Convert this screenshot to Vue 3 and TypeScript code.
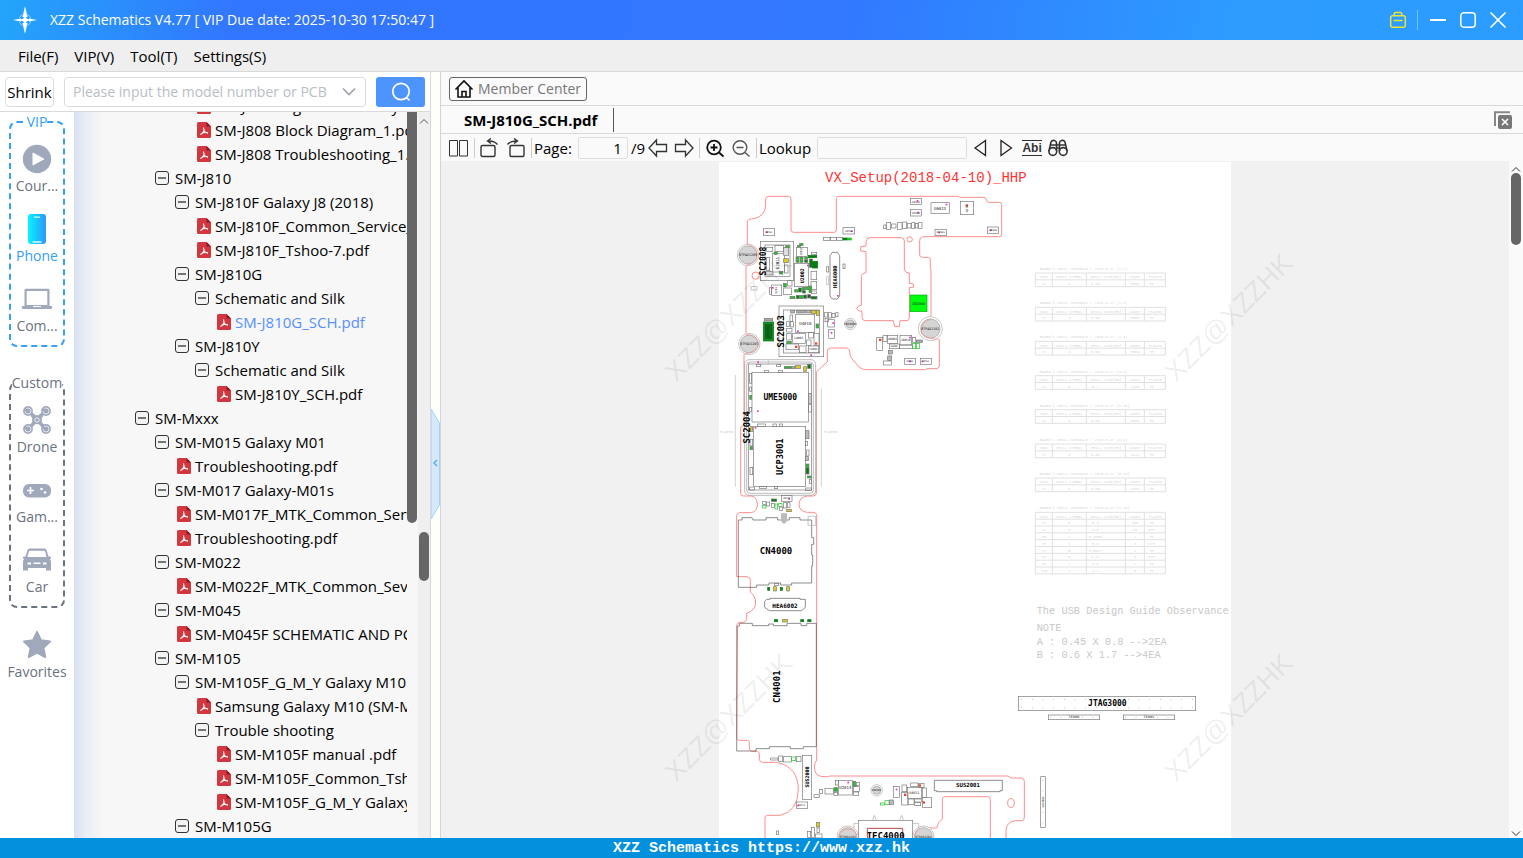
<script setup lang="ts">
import { ref } from 'vue'

interface TreeRow { level: number; label: string; file?: boolean; active?: boolean }
interface Category { id: string; label: string; active?: boolean }
interface Part { x: number; y: number; w: number; h: number; f?: string; s?: string }
interface Mark { x: number; y: number; t: string; z: number; r?: boolean }

const menus = ['File(F)', 'VIP(V)', 'Tool(T)', 'Settings(S)']
const keyword = ref('')
const page = ref('1')
const lookup = ref('')

const groups: { title: string; kind: string; items: Category[] }[] = [
  { title: 'VIP', kind: 'vip', items: [{ id: 'course', label: 'Cour...' }, { id: 'phone', label: 'Phone', active: true }, { id: 'computer', label: 'Com...' }] },
  { title: 'Custom', kind: 'custom', items: [{ id: 'drone', label: 'Drone' }, { id: 'game', label: 'Gam...' }, { id: 'car', label: 'Car' }] },
]

const tree: TreeRow[] = [
  { level: 3, label: 'SM-J808 Regular Assembly', file: true },
  { level: 3, label: 'SM-J808 Block Diagram_1.pdf', file: true },
  { level: 3, label: 'SM-J808 Troubleshooting_1.pdf', file: true },
  { level: 1, label: 'SM-J810' },
  { level: 2, label: 'SM-J810F Galaxy J8 (2018)' },
  { level: 3, label: 'SM-J810F_Common_Service_Manual.pdf', file: true },
  { level: 3, label: 'SM-J810F_Tshoo-7.pdf', file: true },
  { level: 2, label: 'SM-J810G' },
  { level: 3, label: 'Schematic and Silk' },
  { level: 4, label: 'SM-J810G_SCH.pdf', file: true, active: true },
  { level: 2, label: 'SM-J810Y' },
  { level: 3, label: 'Schematic and Silk' },
  { level: 4, label: 'SM-J810Y_SCH.pdf', file: true },
  { level: 0, label: 'SM-Mxxx' },
  { level: 1, label: 'SM-M015 Galaxy M01' },
  { level: 2, label: 'Troubleshooting.pdf', file: true },
  { level: 1, label: 'SM-M017 Galaxy-M01s' },
  { level: 2, label: 'SM-M017F_MTK_Common_Service.pdf', file: true },
  { level: 2, label: 'Troubleshooting.pdf', file: true },
  { level: 1, label: 'SM-M022' },
  { level: 2, label: 'SM-M022F_MTK_Common_Sevice.pdf', file: true },
  { level: 1, label: 'SM-M045' },
  { level: 2, label: 'SM-M045F SCHEMATIC AND PCB.pdf', file: true },
  { level: 1, label: 'SM-M105' },
  { level: 2, label: 'SM-M105F_G_M_Y Galaxy M10' },
  { level: 3, label: 'Samsung Galaxy M10 (SM-M105).pdf', file: true },
  { level: 3, label: 'Trouble shooting' },
  { level: 4, label: 'SM-M105F manual .pdf', file: true },
  { level: 4, label: 'SM-M105F_Common_Tshoo.pdf', file: true },
  { level: 4, label: 'SM-M105F_G_M_Y Galaxy.pdf', file: true },
  { level: 2, label: 'SM-M105G' },
]

// Board artwork uses three units per screen pixel.
const outline = [
  'M82 253V186Q82 177 95 177Q138 172 137 132V116Q138 109 146 109H206Q213 109 213 116V210Q214 217 221 217H342Q349 217 349 210V116Q350 109 357 109H715L718 112H792Q799 114 799 120Q800 127 808 127H838Q845 127 845 134V223Q845 230 838 230H608Q599 233 599 241V285Q600 292 607 292H625Q632 293 631 300V325L633 330V470',
  'M78 318V520M72 583V795L62 802V1000Q62 1008 70 1008H95Q112 1012 112 1033Q112 1056 92 1058H58Q50 1060 50 1067V1250H82Q91 1252 91 1260V1296Q107 1308 107 1330Q106 1350 80 1360V1378Q76 1386 70 1387H58Q50 1389 50 1397V1733Q50 1741 58 1741H82Q88 1742 88 1748V1767Q90 1774 96 1774H112Q118 1776 118 1782V1798Q119 1807 128 1807H170Q235 1820 235 1890Q233 1955 180 1966H142Q135 1967 135 1974V2036',
  'M658 538V618Q657 626 648 626H620L616 629H440Q422 629 412 615L394 594Q390 590 390 580Q390 564 376 564H332Q322 565 322 574V605L289 636V1000Q288 1008 280 1008H262Q237 1012 237 1033Q238 1055 262 1057H282Q289 1058 290 1066V1800Q283 1808 283 1825Q285 1850 312 1850H325L330 1848H864L874 1854H904Q913 1855 913 1864V1972Q913 1980 906 1982H886Q858 1986 858 2012V2036',
  'M450 233H543Q553 233 553 243V330Q555 338 568 339V370L580 372V382H568V475Q568 482 558 482H540L538 500H524L520 482H436Q426 482 426 472V454Q411 453 411 445Q411 438 424 436V350Q424 340 438 338V275L422 273V260L438 258V245Q440 233 450 233Z',
  'M600 2004H650Q654 1985 667 1977V1918Q667 1910 677 1910H803Q811 1911 811 1918V2036',
]

const grey = '#777'
const green = '#19c51e'
const dark = '#087a12'
const yellow = '#dfca22'
const parts: Part[] = [
  { x: 571, y: 115, w: 33, h: 18 }, { x: 571, y: 148, w: 33, h: 20 }, { x: 633, y: 128, w: 55, h: 32 }, { x: 721, y: 124, w: 40, h: 40 },
  { x: 645, y: 208, w: 34, h: 19 }, { x: 802, y: 201, w: 33, h: 19 }, { x: 130, y: 206, w: 34, h: 20 }, { x: 369, y: 203, w: 35, h: 19 },
  { x: 310, y: 232, w: 20, h: 9 }, { x: 331, y: 232, w: 18, h: 9 }, { x: 350, y: 232, w: 18, h: 9 }, { x: 369, y: 234, w: 13, h: 6, f: dark, s: dark }, { x: 383, y: 234, w: 11, h: 6, f: green, s: green },
  { x: 491, y: 195, w: 7, h: 11 }, { x: 500, y: 187, w: 12, h: 21 }, { x: 514, y: 192, w: 14, h: 12 }, { x: 532, y: 188, w: 14, h: 20 }, { x: 548, y: 186, w: 12, h: 20 }, { x: 562, y: 190, w: 11, h: 14 }, { x: 575, y: 188, w: 9, h: 17 }, { x: 586, y: 190, w: 8, h: 14 }, { x: 596, y: 188, w: 10, h: 17 },
  { x: 121, y: 244, w: 100, h: 118 }, { x: 135, y: 255, w: 75, h: 94 }, { x: 158, y: 280, w: 35, h: 56 }, { x: 140, y: 262, w: 18, h: 12 }, { x: 165, y: 256, w: 25, h: 18 }, { x: 191, y: 262, w: 15, h: 24, f: '#ddd' }, { x: 191, y: 296, w: 14, h: 12, f: yellow }, { x: 162, y: 276, w: 10, h: 7, f: green }, { x: 178, y: 334, w: 10, h: 8, f: green }, { x: 193, y: 315, w: 11, h: 24 }, { x: 140, y: 292, w: 9, h: 40 }, { x: 135, y: 335, w: 24, h: 10, f: '#ddd' }, { x: 197, y: 257, w: 11, h: 6, f: green },
  { x: 223, y: 310, w: 43, h: 70 }, { x: 229, y: 262, w: 33, h: 27 }, { x: 239, y: 250, w: 10, h: 7, f: green }, { x: 232, y: 256, w: 9, h: 5, f: green },
  { x: 228, y: 291, w: 9, h: 7, f: green }, { x: 240, y: 291, w: 9, h: 7, f: green }, { x: 254, y: 291, w: 9, h: 7, f: green }, { x: 228, y: 300, w: 9, h: 7, f: green }, { x: 240, y: 300, w: 9, h: 7, f: green }, { x: 254, y: 300, w: 9, h: 7, f: dark },
  { x: 265, y: 286, w: 25, h: 7, f: dark, s: dark }, { x: 268, y: 297, w: 10, h: 25, f: dark }, { x: 277, y: 304, w: 16, h: 20, f: dark, s: dark }, { x: 274, y: 277, w: 16, h: 6 }, { x: 273, y: 334, w: 17, h: 25 }, { x: 273, y: 364, w: 17, h: 25 }, { x: 267, y: 378, w: 8, h: 20, f: green }, { x: 275, y: 393, w: 14, h: 8 },
  { x: 224, y: 389, w: 9, h: 7, f: green }, { x: 235, y: 384, w: 9, h: 12, f: dark }, { x: 246, y: 382, w: 9, h: 8, f: green }, { x: 257, y: 381, w: 9, h: 8, f: green }, { x: 247, y: 392, w: 9, h: 7, f: dark },
  { x: 210, y: 409, w: 15, h: 7, f: green }, { x: 229, y: 406, w: 9, h: 10, f: dark }, { x: 240, y: 406, w: 9, h: 10, f: green }, { x: 251, y: 405, w: 9, h: 10, f: dark }, { x: 263, y: 404, w: 9, h: 10, f: '#444' }, { x: 273, y: 409, w: 18, h: 8, f: dark },
  { x: 155, y: 375, w: 30, h: 31 }, { x: 149, y: 383, w: 5, h: 20 }, { x: 190, y: 370, w: 9, h: 11, f: green }, { x: 203, y: 362, w: 13, h: 16 }, { x: 191, y: 384, w: 23, h: 20 },
  { x: 130, y: 486, w: 31, h: 57, f: '#138e25', s: '#0b7319' }, { x: 137, y: 493, w: 17, h: 42, f: '#087018', s: '#055512' }, { x: 133, y: 475, w: 25, h: 8, f: '#aaa' },
  { x: 177, y: 438, w: 134, h: 152 }, { x: 190, y: 450, w: 109, h: 129 }, { x: 226, y: 463, w: 58, h: 54 }, { x: 218, y: 520, w: 38, h: 30 }, { x: 282, y: 520, w: 15, h: 36 }, { x: 265, y: 558, w: 31, h: 20 }, { x: 260, y: 540, w: 13, h: 17 }, { x: 265, y: 517, w: 15, h: 17 },
  { x: 210, y: 465, w: 8, h: 20 }, { x: 200, y: 485, w: 8, h: 15 }, { x: 212, y: 485, w: 8, h: 16 }, { x: 200, y: 505, w: 16, h: 11 }, { x: 200, y: 520, w: 14, h: 20 }, { x: 200, y: 544, w: 14, h: 7, f: green }, { x: 198, y: 552, w: 38, h: 17 }, { x: 238, y: 558, w: 20, h: 20 },
  { x: 212, y: 451, w: 12, h: 8, f: '#bbb' }, { x: 230, y: 451, w: 26, h: 8, f: '#aaa' }, { x: 260, y: 451, w: 12, h: 8, f: '#bbb' }, { x: 274, y: 451, w: 14, h: 9, f: yellow }, { x: 289, y: 452, w: 9, h: 14, f: yellow }, { x: 288, y: 492, w: 8, h: 12, f: green },
  { x: 313, y: 458, w: 10, h: 13 }, { x: 325, y: 458, w: 9, h: 16 }, { x: 336, y: 460, w: 9, h: 13 }, { x: 347, y: 458, w: 7, h: 12 }, { x: 315, y: 475, w: 10, h: 10 }, { x: 323, y: 479, w: 20, h: 22 }, { x: 326, y: 508, w: 17, h: 27 },
  { x: 470, y: 532, w: 18, h: 39 }, { x: 489, y: 527, w: 12, h: 17 }, { x: 502, y: 526, w: 31, h: 24 }, { x: 540, y: 526, w: 35, h: 29 }, { x: 508, y: 552, w: 30, h: 14 }, { x: 538, y: 555, w: 39, h: 11 }, { x: 577, y: 532, w: 10, h: 15 }, { x: 578, y: 550, w: 9, h: 16, s: green }, { x: 589, y: 550, w: 9, h: 16, s: green }, { x: 589, y: 540, w: 18, h: 7, f: '#aaa' },
  { x: 505, y: 571, w: 12, h: 11, f: '#bbb' }, { x: 503, y: 588, w: 12, h: 13, f: '#bbb' }, { x: 490, y: 603, w: 24, h: 12 }, { x: 554, y: 595, w: 32, h: 18 }, { x: 601, y: 595, w: 33, h: 18 }, { x: 570, y: 405, w: 51, h: 50, f: '#00ff0c', s: '#0aa813' },
  { x: 320, y: 320, w: 6, h: 16 }, { x: 320, y: 350, w: 6, h: 24, s: '#bbb' }, { x: 369, y: 312, w: 6, h: 14 }, { x: 93, y: 380, w: 18, h: 10, s: '#aaa' },
  { x: 85, y: 612, w: 190, h: 378 }, { x: 96, y: 637, w: 169, h: 149 }, { x: 101, y: 799, w: 156, h: 180 },
  { x: 110, y: 613, w: 12, h: 7 }, { x: 170, y: 613, w: 12, h: 7 }, { x: 134, y: 631, w: 11, h: 7 }, { x: 176, y: 631, w: 11, h: 7 }, { x: 193, y: 619, w: 10, h: 7, f: green }, { x: 204, y: 619, w: 10, h: 7, f: green }, { x: 227, y: 616, w: 14, h: 10, f: yellow }, { x: 251, y: 620, w: 8, h: 14, f: yellow }, { x: 263, y: 613, w: 9, h: 12, f: dark }, { x: 215, y: 619, w: 10, h: 7, f: '#aaa' },
  { x: 89, y: 640, w: 6, h: 30 }, { x: 89, y: 681, w: 6, h: 13 }, { x: 89, y: 706, w: 6, h: 12, f: green }, { x: 89, y: 742, w: 6, h: 12 }, { x: 266, y: 700, w: 8, h: 30, f: '#ccc' }, { x: 266, y: 733, w: 8, h: 23 },
  { x: 90, y: 800, w: 8, h: 14, f: yellow }, { x: 90, y: 838, w: 8, h: 20 }, { x: 90, y: 860, w: 8, h: 9, f: green }, { x: 90, y: 922, w: 8, h: 22 }, { x: 112, y: 792, w: 24, h: 7 }, { x: 159, y: 792, w: 10, h: 7 }, { x: 178, y: 792, w: 10, h: 7 }, { x: 89, y: 981, w: 14, h: 9 }, { x: 119, y: 979, w: 20, h: 7 }, { x: 163, y: 979, w: 10, h: 7 }, { x: 257, y: 984, w: 17, h: 8 },
  { x: 257, y: 812, w: 10, h: 24, f: '#bbb' }, { x: 256, y: 844, w: 7, h: 12 }, { x: 260, y: 870, w: 7, h: 18 }, { x: 256, y: 890, w: 9, h: 12, f: '#bbb' }, { x: 258, y: 912, w: 9, h: 9, f: green }, { x: 258, y: 923, w: 9, h: 19, f: dark }, { x: 262, y: 948, w: 12, h: 6, f: green }, { x: 268, y: 958, w: 6, h: 12 },
  { x: 184, y: 1006, w: 32, h: 18 }, { x: 154, y: 1017, w: 16, h: 7, f: dark }, { x: 128, y: 1024, w: 10, h: 9 }, { x: 128, y: 1036, w: 10, h: 8, s: green }, { x: 140, y: 1026, w: 9, h: 12 }, { x: 154, y: 1030, w: 9, h: 12 }, { x: 165, y: 1032, w: 8, h: 15, s: green }, { x: 176, y: 1030, w: 10, h: 9, s: green }, { x: 178, y: 1041, w: 10, h: 10 }, { x: 190, y: 1028, w: 10, h: 16 }, { x: 202, y: 1028, w: 8, h: 14 }, { x: 200, y: 1048, w: 14, h: 7, f: yellow },
  { x: 143, y: 1282, w: 6, h: 9, f: dark, s: dark }, { x: 161, y: 1280, w: 8, h: 13, f: yellow }, { x: 181, y: 1282, w: 6, h: 9, f: dark, s: dark }, { x: 200, y: 1280, w: 8, h: 13, f: yellow }, { x: 164, y: 1270, w: 11, h: 7 },
  { x: 163, y: 1379, w: 10, h: 6, f: dark, s: dark }, { x: 188, y: 1378, w: 14, h: 8, f: yellow }, { x: 242, y: 1379, w: 9, h: 6, f: dark, s: dark }, { x: 263, y: 1379, w: 10, h: 6, f: dark, s: dark },
  { x: 247, y: 1786, w: 28, h: 132 }, { x: 176, y: 1788, w: 12, h: 16 }, { x: 190, y: 1790, w: 24, h: 16 }, { x: 215, y: 1791, w: 12, h: 11, s: green }, { x: 229, y: 1789, w: 14, h: 16 }, { x: 152, y: 1794, w: 22, h: 6 }, { x: 229, y: 1926, w: 34, h: 19 },
  { x: 355, y: 1861, w: 42, h: 44 }, { x: 399, y: 1864, w: 8, h: 15, f: green }, { x: 409, y: 1867, w: 9, h: 10 }, { x: 400, y: 1880, w: 18, h: 14 }, { x: 400, y: 1896, w: 16, h: 10 }, { x: 342, y: 1883, w: 11, h: 11, f: green }, { x: 342, y: 1897, w: 11, h: 9 }, { x: 315, y: 1885, w: 25, h: 17 }, { x: 298, y: 1888, w: 10, h: 12 }, { x: 282, y: 1904, w: 16, h: 8 }, { x: 346, y: 1861, w: 9, h: 14 },
  { x: 520, y: 1879, w: 18, h: 33 }, { x: 562, y: 1882, w: 43, h: 33 }, { x: 545, y: 1897, w: 19, h: 38 }, { x: 607, y: 1884, w: 12, h: 28 }, { x: 546, y: 1875, w: 14, h: 20 }, { x: 572, y: 1869, w: 22, h: 10 }, { x: 596, y: 1870, w: 16, h: 13 }, { x: 564, y: 1917, w: 18, h: 16 }, { x: 584, y: 1917, w: 20, h: 9 }, { x: 584, y: 1928, w: 18, h: 9 }, { x: 607, y: 1913, w: 28, h: 29 }, { x: 495, y: 1922, w: 12, h: 11, s: green }, { x: 508, y: 1920, w: 12, h: 14, f: '#bbb' }, { x: 481, y: 1929, w: 12, h: 6, s: green },
  { x: 289, y: 1987, w: 10, h: 14, f: yellow }, { x: 291, y: 2004, w: 7, h: 14 }, { x: 262, y: 2014, w: 10, h: 18 }, { x: 274, y: 2002, w: 9, h: 30 }, { x: 286, y: 2022, w: 20, h: 12 }, { x: 169, y: 2013, w: 7, h: 10 },
  { x: 415, y: 1981, w: 163, h: 60 }, { x: 895, y: 1609, w: 532, h: 43 }, { x: 985, y: 1665, w: 154, h: 14 }, { x: 1210, y: 1665, w: 154, h: 14 }, { x: 962, y: 1850, w: 14, h: 152 },
]

const marks: Mark[] = [
  { x: 181, y: 720, t: 'UME5000', z: 24 }, { x: 188, y: 890, t: 'UCP3001', z: 26, r: true }, { x: 90, y: 802, t: 'SC2004', z: 27, r: true },
  { x: 139, y: 303, t: 'SC2008', z: 24, r: true }, { x: 193, y: 514, t: 'SC2003', z: 27, r: true }, { x: 252, y: 347, t: 'U2002', z: 15, r: true }, { x: 350, y: 350, t: 'HEA6000', z: 16, r: true },
  { x: 168, y: 1182, t: 'CN4000', z: 27 }, { x: 195, y: 1343, t: 'HEA6002', z: 18 }, { x: 180, y: 1580, t: 'CN4001', z: 27, r: true },
  { x: 267, y: 1851, t: 'SUS2000', z: 15, r: true }, { x: 744, y: 1882, t: 'SUS2001', z: 17 }, { x: 497, y: 2036, t: 'IFC4000', z: 27 }, { x: 1162, y: 1639, t: 'JTAG3000', z: 24 },
]
const minor: Mark[] = [
  { x: 660, y: 149, t: 'U6013', z: 12 }, { x: 588, y: 128, t: 'ANT602', z: 7 }, { x: 588, y: 162, t: 'ANT603', z: 7 }, { x: 743, y: 146, t: 'ANT6', z: 9, r: true }, { x: 256, y: 494, t: 'U4010', z: 12 }, { x: 236, y: 538, t: 'LA003', z: 9 }, { x: 177, y: 309, t: 'U2015', z: 12, r: true },
  { x: 518, y: 541, t: 'U6001', z: 9 }, { x: 558, y: 544, t: 'U6010', z: 9 }, { x: 522, y: 562, t: 'F6000', z: 7 }, { x: 596, y: 434, t: 'CN2000', z: 11 }, { x: 148, y: 515, t: 'USC2001', z: 9, r: true },
  { x: 376, y: 1888, t: 'U2014', z: 12 }, { x: 583, y: 1901, t: 'U4012', z: 10 }, { x: 84, y: 289, t: 'BTPAD1209', z: 10 }, { x: 88, y: 556, t: 'BTPAD1205', z: 10 }, { x: 631, y: 511, t: 'BTPAD1202', z: 10 }, { x: 391, y: 495, t: 'PAD6004', z: 9 },
  { x: 470, y: 1894, t: 'PAD401', z: 8 }, { x: 383, y: 2034, t: 'BTPAD1203', z: 9 }, { x: 610, y: 2034, t: 'BTPAD1204', z: 9 }, { x: 245, y: 274, t: 'U2012', z: 8, r: true }, { x: 172, y: 391, t: 'Q201', z: 8, r: true }, { x: 280, y: 571, t: 'C4003', z: 8 }, { x: 1062, y: 1675, t: 'TP3000', z: 9 }, { x: 1287, y: 1675, t: 'TP3001', z: 9 }, { x: 972, y: 1926, t: 'SUS2002', z: 8, r: true },
  { x: 146, y: 219, t: 'ANT61', z: 7 }, { x: 386, y: 215, t: 'ANT65', z: 7 }, { x: 662, y: 220, t: 'ANT601', z: 7 }, { x: 819, y: 213, t: 'ANT602', z: 7 }, { x: 570, y: 606, t: 'ANT62', z: 7 }, { x: 616, y: 606, t: 'ANT63', z: 7 }, { x: 200, y: 1018, t: 'ANT40', z: 7 }, { x: 245, y: 1938, t: 'ANT41', z: 7 },
]
const pins = [[592, 122], [594, 157], [679, 133], [657, 217], [812, 210], [395, 213], [140, 216], [263, 316], [233, 513], [158, 383], [273, 585], [570, 604], [607, 604], [570, 532], [114, 606], [113, 753], [106, 803], [207, 1016], [234, 1936], [339, 489], [334, 518], [384, 1867], [529, 1888], [353, 407]]
const hots = [[740, 136], [480, 539], [228, 560], [288, 550], [599, 1876], [555, 1904], [611, 1927]]
const pads = [[84, 285, 32, 27], [88, 552, 32, 27], [631, 506, 36, 29], [391, 492, 17, 12], [383, 2030, 32, 27], [610, 2030, 32, 27], [470, 1891, 17, 12]]

const drills = [
  { span: '(1-2)', rows: [['T1', 'O', '0.09', '5008', 'TH']] },
  { span: '(1-3)', rows: [['T1', 'O', '0.09', '6085', 'TH']] },
  { span: '(2-3)', rows: [['T1', 'O', '0.09', '3884', 'TH']] },
  { span: '(3-8)', rows: [['T2', '⊕', '0.2', '2485', 'TH']] },
  { span: '(8-10)', rows: [['T1', 'O', '0.09', '5858', 'TH']] },
  { span: '(8-9)', rows: [['T1', 'O', '0.09', '2821', 'TH']] },
  { span: '(9-10)', rows: [['T1', 'O', '0.09', '4304', 'TH']] },
  { span: '(1-10)', rows: [['T3', '⊕', '0.3', '380', 'TH'], ['T4', '⊕', '0.5', '48', 'NTH'], ['T5', '◇', '0.4500', '2', 'TH'], ['T6', '□', '0.6', '3', 'NTH'], ['T7', '⊠', '0.6017', '4', 'TH'], ['T8', '⊠', '1.42', '3', 'NTH'], ['T9', '+', '1.6', '2', 'TH'], ['T10', 'x', '4.4', '5', 'TH']] },
]
const heads = ['TOOL', 'DRILL SYMBOL', 'DRILL SIZE(mm)', 'COUNT', 'PLATED']
const centers = [26, 102, 212, 299, 360]
const edges = [0, 51, 153, 270, 327, 390]
const drillTop = (i: number) => 339 + Math.round(i * 102.5)
const stamps = [[-132, 669], [1368, 669], [-132, 1869], [1368, 1869]]
</script>

<template>
  <div class="app">
    <header class="titlebar">
      <svg class="logo" width="26" height="30" viewBox="0 0 26 30" aria-hidden="true">
        <path d="M13 1L15.500 12L10.500 12ZM13 29L10.500 18H15.500ZM1 15L9 13.600V16.400ZM25 15L17 13.600V16.400Z" fill="#fff" />
        <circle cx="13" cy="15" r="6" fill="none" stroke="#8fd0ff" stroke-width="1" stroke-dasharray="6 3.400" stroke-dashoffset="-1.500" />
        <path d="M13 8L14.500 13.500L19 15L14.500 16.500L13 22L11.500 16.500L7 15L11.500 13.500Z" fill="#fff" />
      </svg>
      <h1>XZZ Schematics V4.77 [ VIP Due date: 2025-10-30 17:50:47 ]</h1>
      <button class="win vipbag" aria-label="VIP"><svg width="18" height="18" viewBox="0 0 18 18"><g fill="none" stroke="#e8e337" stroke-width="1.5"><rect x="1.7" y="4.7" width="14.6" height="11.6" rx="2" /><path d="M5.2 4.5V3Q5.2 1.5 6.6 1.5H11.4Q12.8 1.5 12.8 3V4.5M4.500 9.500H13.500" /></g></svg></button>
      <span class="winsep"></span>
      <button class="win" aria-label="Minimize"><svg width="18" height="18" viewBox="0 0 18 18"><path d="M1 9H17" stroke="#fff" stroke-width="2" /></svg></button>
      <button class="win" aria-label="Maximize"><svg width="18" height="18" viewBox="0 0 18 18"><rect x="1.8" y="1.8" width="14.4" height="14.4" rx="3" fill="none" stroke="#fff" stroke-width="1.5" /></svg></button>
      <button class="win" aria-label="Close"><svg width="18" height="18" viewBox="0 0 18 18"><path d="M1.5 1.5L16.5 16.5M16.5 1.5L1.5 16.5" stroke="#fff" stroke-width="1.7" /></svg></button>
    </header>

    <nav class="menubar"><button v-for="m in menus" :key="m">{{ m }}</button></nav>

    <main class="body">
      <section class="left">
        <form class="search" @submit.prevent>
          <button type="button" class="shrink">Shrink</button>
          <div class="combo">
            <input v-model="keyword" aria-label="Model number" placeholder="Please input the model number or PCB" />
            <button type="button" aria-label="Show history"><svg width="16" height="10" viewBox="0 0 16 10"><path d="M2 1.5L8 7.5L14 1.5" fill="none" stroke="#a0a4aa" stroke-width="1.7" /></svg></button>
          </div>
          <button class="go" aria-label="Search"><svg width="22" height="22" viewBox="0 0 22 22"><g fill="none" stroke="#fff" stroke-width="1.7"><circle cx="11" cy="10.5" r="8.2" /><path d="M16.5 16.5L19.5 19.5" /></g></svg></button>
        </form>

        <div class="browse">
          <aside class="cats">
            <fieldset v-for="g in groups" :key="g.title" :class="g.kind">
              <legend>{{ g.title }}</legend>
              <button v-for="c in g.items" :key="c.id" class="cat" :class="{ on: c.active }">
                <svg v-if="c.id === 'course'" width="34" height="34" viewBox="0 0 34 34"><circle cx="17" cy="17" r="14.2" fill="#a0a8bb" /><path d="M12.5 11.3V22.7Q12.5 23.6 13.4 23.2L23.8 17.6Q24.6 17 23.8 16.4L13.4 10.8Q12.5 10.4 12.5 11.3Z" fill="#fff" /></svg>
                <svg v-else-if="c.id === 'phone'" width="34" height="34" viewBox="0 0 34 34"><defs><linearGradient id="ph"><stop offset="0" stop-color="#04f4ff" /><stop offset="1" stop-color="#2e96fb" /></linearGradient></defs><rect x="8" y="2" width="18" height="30" rx="3" fill="url(#ph)" /><path d="M14.5 5.2H19.5M13 30H21" stroke="#d9fbff" stroke-width="1.3" stroke-linecap="round" /></svg>
                <svg v-else-if="c.id === 'computer'" width="34" height="34" viewBox="0 0 34 34"><path fill-rule="evenodd" fill="#a0a8bb" d="M4.5 8Q4.5 6.7 5.8 6.7H28.2Q29.5 6.7 29.5 8V24H32V25.5Q32 27 30.5 27H3.500Q2 27 2 25.500V24H4.500ZM6.700 9V23H27.300V9ZM13 24V25H21V24Z" /></svg>
                <svg v-else-if="c.id === 'drone'" width="34" height="34" viewBox="0 0 34 34"><path d="M8 8L15 14H19L26 8M8 26L14 20V14M26 26L20 20V14M12 12L22 22M22 12L12 22" fill="none" stroke="#a0a8bb" stroke-width="3.600" /><circle v-for="p in [[8,8],[26,8],[8,26],[26,26]]" :key="p.join()" :cx="p[0]" :cy="p[1]" r="4.900" fill="#a0a8bb" /><g fill="none" stroke="#fff" stroke-width=".7"><circle v-for="p in [[8,8],[26,8],[8,26],[26,26]]" :key="p.join()" :cx="p[0]" :cy="p[1]" r="3" stroke-dasharray="9 3" /></g><circle cx="17" cy="17" r="4.200" fill="#a0a8bb" /><circle cx="17" cy="17" r="2.200" fill="none" stroke="#fff" stroke-width=".8" /></svg>
                <svg v-else-if="c.id === 'game'" width="34" height="34" viewBox="0 0 34 34"><rect x="3" y="11" width="28" height="13.500" rx="6" fill="#a0a8bb" /><path d="M7 17.500H14M10.500 14V21" stroke="#fff" stroke-width="1.700" /><circle cx="21.500" cy="16" r="1.300" fill="#fff" /><circle cx="25" cy="19.500" r="1.300" fill="#fff" /></svg>
                <svg v-else width="34" height="34" viewBox="0 0 34 34"><path fill-rule="evenodd" fill="#a0a8bb" d="M9.500 5.500H24.500Q26 5.500 26.500 7L28.500 13.500L31 13.800V15.500L29.800 16Q31 17 31 19V27.500H26V25H8V27.500H3V19Q3 17 4.200 16L3 15.500V13.800L5.500 13.500L7.500 7Q8 5.500 9.500 5.500ZM10 7.800Q9 7.800 8.800 8.800L7.500 14H26.500L25.200 8.800Q25 7.800 24 7.800ZM7.500 19.500V21.500H11V19.500ZM13.500 19.500V21H20.500V19.500ZM23 19.500V21.500H26.500V19.500Z" /></svg>
                <span>{{ c.label }}</span>
              </button>
            </fieldset>
            <button class="cat fav">
              <svg width="34" height="34" viewBox="0 0 34 34"><path d="M17 4L20.900 12.300L30 13.500L23.400 19.700L25.200 29L17 24.500L8.800 29L10.600 19.700L4 13.500L13.100 12.300Z" fill="#a0a8bb" stroke="#a0a8bb" stroke-width="2" stroke-linejoin="round" /></svg>
              <span>Favorites</span>
            </button>
          </aside>
          <div class="treebox">
            <ul class="tree">
              <li v-for="(n, i) in tree" :key="i" :class="['l' + n.level, { active: n.active, file: n.file }]">
                <svg v-if="n.file" width="16" height="18" viewBox="0 0 16 18"><path d="M1 2.500Q1 1 2.500 1H10.500L15 5.500V15.500Q15 17 13.500 17H2.500Q1 17 1 15.500Z" fill="#d2373f" /><path d="M10.500 1L15 5.500H10.500Z" fill="#8d1620" /><path d="M7.500 6.500Q8.600 8.800 7.200 11Q6 13.200 4.200 13.500M7.800 9.500Q9.500 12 12 12.200M5.800 12Q9 10.800 12 12" fill="none" stroke="#fff" stroke-width="1.100" /></svg>
                <button v-else :aria-label="'Collapse ' + n.label"><svg width="16" height="16" viewBox="0 0 16 16"><rect x="1.500" y="1.500" width="13" height="13" rx="2.500" fill="#f3f3f3" stroke="#333" /><path d="M4 8H12" stroke="#222" stroke-width="1.200" /></svg></button>
                <a href="#" @click.prevent>{{ n.label }}</a>
              </li>
            </ul>
            <div class="innerbar"><i></i></div>
          </div>
          <div class="outerbar">
            <svg width="12" height="8" viewBox="0 0 12 8"><path d="M2 6.500L6 2.500L10 6.500" fill="none" stroke="#555" /></svg>
            <i></i>
          </div>
        </div>
      </section>

      <div class="splitter"><button aria-label="Collapse panel"><svg width="9" height="110" viewBox="0 0 9 110"><path d="M0 0L8.500 14V96L0 110Z" fill="#d5e9fb" stroke="#9fd1fb" /><path d="M6 51L3 54L6 57" fill="none" stroke="#4ea8f4" stroke-width="1.300" /></svg></button></div>

      <section class="right">
        <div class="memberrow">
          <button class="member"><svg width="20" height="20" viewBox="0 0 20 20"><g fill="none" stroke="#111" stroke-width="1.600"><path d="M1.500 10.500L10 2L18.500 10.500M4 8.500V18H16V8.500M8 18V12.500H12V18" /></g></svg>Member Center</button>
        </div>
        <div class="tabs">
          <button class="tab">SM-J810G_SCH.pdf</button>
          <button class="closeall" aria-label="Close all"><svg width="20" height="20" viewBox="0 0 20 20"><path d="M2 16V2.200H17" fill="none" stroke="#888" stroke-width="2" /><rect x="5" y="5" width="14" height="14" rx="2" fill="#777" /><path d="M9 9L15 15M15 9L9 15" stroke="#fff" stroke-width="1.600" /></svg></button>
        </div>
        <div class="toolbar">
          <button aria-label="Two pages"><svg width="20" height="20" viewBox="0 0 20 20"><path d="M.5 2.500H8.500V18H.5ZM10.500 2.500H18.500V18H10.500Z" fill="none" stroke="#333" /></svg></button>
          <i class="sep"></i>
          <button aria-label="Rotate left"><svg width="20" height="20" viewBox="0 0 20 20"><g fill="none" stroke="#333" stroke-width="1.400"><rect x="1" y="7.500" width="14" height="11" rx="1.500" /><path d="M17.500 6.500Q14 2.500 8 3M11 .5L7.500 3L11 5.500" /></g></svg></button>
          <button aria-label="Rotate right"><svg width="20" height="20" viewBox="0 0 20 20"><g fill="none" stroke="#333" stroke-width="1.400"><rect x="4" y="7.500" width="14" height="11" rx="1.500" /><path d="M1.500 6.500Q5 2.500 11 3M8 .5L11.500 3L8 5.500" /></g></svg></button>
          <i class="sep"></i>
          <label for="page">Page:</label><input id="page" v-model="page" class="page" />
          <span class="total">/9</span>
          <button class="near" aria-label="Previous page"><svg width="20" height="20" viewBox="0 0 20 20"><path d="M1 10L8.500 2V6.500H18.500V13.500H8.500V18Z" fill="none" stroke="#333" stroke-width="1.300" /></svg></button>
          <button aria-label="Next page"><svg width="20" height="20" viewBox="0 0 20 20"><path d="M19 10L11.500 2V6.500H1.500V13.500H11.500V18Z" fill="none" stroke="#333" stroke-width="1.300" /></svg></button>
          <i class="sep"></i>
          <button aria-label="Zoom in"><svg width="20" height="20" viewBox="0 0 20 20"><g fill="none" stroke="#111" stroke-width="1.800"><circle cx="9" cy="9.500" r="6.800" /><path d="M14 14.500L18.500 18.500M5.500 9.500H12.500M9 6V13" /></g></svg></button>
          <button aria-label="Zoom out"><svg width="20" height="20" viewBox="0 0 20 20"><g fill="none" stroke="#555" stroke-width="1.400"><circle cx="9" cy="9.500" r="6.800" /><path d="M14 14.500L18.500 18.500M5.500 9.500H12.500" /></g></svg></button>
          <i class="sep"></i>
          <label for="lookup">Lookup</label><input id="lookup" v-model="lookup" class="lookup" />
          <button class="near" aria-label="Find previous"><svg width="20" height="20" viewBox="0 0 20 20"><path d="M15.500 2.500V17.500L5 10Z" fill="none" stroke="#222" stroke-width="1.300" /></svg></button>
          <button aria-label="Find next"><svg width="20" height="20" viewBox="0 0 20 20"><path d="M5 2.500V17.500L15.500 10Z" fill="none" stroke="#222" stroke-width="1.300" /></svg></button>
          <button class="abi">Abi</button>
          <button aria-label="Find all"><svg width="20" height="20" viewBox="0 0 20 20"><g fill="none" stroke="#333" stroke-width="1.600"><path d="M1 13L3 4Q4 2 6.500 2.500Q8.500 3 8.500 5V13M19 13L17 4Q16 2 13.500 2.500Q11.500 3 11.500 5V13M3 7H17M9 10H11" /><circle cx="4.800" cy="13.500" r="3.900" /><circle cx="15.200" cy="13.500" r="3.900" /></g></svg></button>
        </div>
        <div class="viewer">
          <div class="canvas">
            <svg class="sheet" width="512" height="676" viewBox="-3 6 1536 2028" role="img" aria-label="VX_Setup board placement">
              <rect x="-3" y="6" width="1536" height="2040" fill="#fff" />
              <text x="315" y="67" class="heading">VX_Setup(2018-04-10)_HHP</text>
              <g class="drill">
                <g v-for="(d, i) in drills" :key="i" :transform="`translate(946 ${drillTop(i)})`">
                  <text x="13" y="-9">BOARD's DRILL SCHEDULE / 2018-5-17 {{ d.span }}</text>
                  <path v-for="e in edges" :key="e" :d="`M${e} 0V${(d.rows.length + 1) * 20.5}`" />
                  <path v-for="r in d.rows.length + 2" :key="'r' + r" :d="`M0 ${(r - 1) * 20.5}H390`" />
                  <text v-for="(h, k) in heads" :key="h" :x="centers[k]" y="16" text-anchor="middle">{{ h }}</text>
                  <template v-for="(row, ri) in d.rows" :key="ri">
                    <text v-for="(c, k) in row" :key="k" :x="[26, 102, 180, 299, 348][k]" :y="36 + ri * 20.5" text-anchor="middle">{{ c }}</text>
                  </template>
                </g>
              </g>
              <g class="note">
                <text x="950" y="1362">The USB Design Guide Observance</text>
                <text x="950" y="1413">NOTE</text>
                <text x="950" y="1455">A : 0.45 X 0.8 --&gt;2EA</text>
                <text x="950" y="1493">B : 0.6 X 1.7 --&gt;4EA</text>
              </g>
              <g class="outline">
                <path v-for="o in outline" :key="o" :d="o" />
                <circle cx="107" cy="347" r="11" /><circle cx="569" cy="238" r="8" /><ellipse cx="873" cy="1929" rx="10" ry="13" />
              </g>
              <g fill="none" stroke="#999" stroke-width="2">
                <rect x="74" y="599" width="213" height="407" rx="14" /><rect x="80" y="606" width="200" height="394" rx="10" />
                <path d="M145 600V612M46 645V980M304 685V980" stroke="#bbb" />
              </g>
              <g fill="none" stroke="#555" stroke-width="2">
                <path d="M55 1080H66V1073H96L99 1080H138V1073H173V1080H208V1073H240V1080H275V1133H281V1153H275V1185H278V1217H275V1269H215V1275H182V1269H147V1275H110V1282H55Z" />
                <path d="M264 1069H287V1096H264Z" stroke="#aaa" />
                <path d="M52 1398H58V1390H97V1397H146V1392H160V1397H201V1390H243V1397H260V1390H289V1760H250V1766H211V1760H148V1766H108V1773H50Z" />
                <path d="M140 1318H150V1315H240V1318H256V1342L245 1352H148L134 1342V1324ZM337 277H352L359 287V408L352 417H337L330 408V287Z" />
                <path d="M643 1861H847V1892H840V1895H650V1892H643Z" />
              </g>
              <path d="M183 1060H201V1083Q192 1100 183 1083Z" fill="#bbb" />
              <g v-for="p in pads" :key="p.join()">
                <circle :cx="p[0]" :cy="p[1]" :r="p[2]" fill="#fff" stroke="#aaa" stroke-width="2" />
                <circle :cx="p[0]" :cy="p[1]" :r="p[3]" fill="#d5d5d5" stroke="#999" stroke-width="2" />
              </g>
              <g fill="none" stroke="#ff8c8c" stroke-width="2">
                <path d="M82 253Q114 258 111 290Q105 312 78 316M78 522Q112 528 116 553Q112 574 72 583M633 478Q602 485 604 520Q615 536 658 538M358 2030A27 27 0 0 1 410 2025M585 2025A27 27 0 0 1 600 2004" />
              </g>
              <rect v-for="(p, i) in parts" :key="i" :x="p.x" :y="p.y" :width="p.w" :height="p.h" :fill="p.f || 'none'" :stroke="p.s || grey" stroke-width="2" />
              <path d="M442 2040V2005H548V2040" fill="none" stroke="#b9484b" stroke-width="3" />
              <path d="M457 1981L463 1966L469 1981M539 1981L545 1966L551 1981M402 2005V1990H414M579 1990H596V2005" fill="none" stroke="#aaa" stroke-width="2" />
              <path d="M904 1618H1420M904 1643H1420M990 1672H1135M1215 1672H1360M969 1860V1995" fill="none" stroke="#aaa" stroke-width="3" stroke-dasharray="2 30" />
              <rect v-for="p in pins" :key="p.join()" :x="p[0] - 2" :y="p[1] - 2" width="5" height="5" fill="#ed2fc0" />
              <rect v-for="p in hots" :key="p.join()" :x="p[0] - 3" :y="p[1] - 3" width="7" height="7" fill="#e8452c" />
              <g class="minor"><text v-for="m in minor" :key="m.t + m.x + m.y" :x="m.x" :y="m.y" :font-size="m.z" :transform="m.r ? `rotate(-90 ${m.x} ${m.y})` : undefined">{{ m.t }}</text></g>
              <g class="major"><text v-for="m in marks" :key="m.t" :x="m.x" :y="m.y" :font-size="m.z" :transform="m.r ? `rotate(-90 ${m.x} ${m.y})` : undefined">{{ m.t }}</text></g>
              <g class="note plated"><text x="0" y="820">PLATED</text><text x="312" y="820">PLATED</text></g>
              <text v-for="s in stamps" :key="s.join()" class="stamp" :transform="`translate(${s[0]} ${s[1]}) rotate(-45)`">XZZ@XZZHK</text>
            </svg>
          </div>
          <div class="viewbar">
            <svg width="12" height="8" viewBox="0 0 12 8"><path d="M2 6.500L6 2.500L10 6.500" fill="none" stroke="#333" /></svg>
            <i></i>
            <svg class="down" width="12" height="8" viewBox="0 0 12 8"><path d="M2 1.500L6 5.500L10 1.500" fill="none" stroke="#333" /></svg>
          </div>
        </div>
      </section>
    </main>
    <footer>XZZ Schematics https://www.xzz.hk</footer>
  </div>
</template>

<style>
body { margin: 0; }
</style>

<style scoped>
.app { display: flex; flex-direction: column; height: 100vh; overflow: hidden; background: #fff; color: #000; font: 15px/20px "Open Sans", "Noto Sans", sans-serif; }
.app * { box-sizing: border-box; }
button, input { font: inherit; color: inherit; margin: 0; padding: 0; border: 0; background: none; }
svg { display: block; flex: none; }

.titlebar { display: flex; align-items: center; flex: none; height: 40px; padding: 0 16px 0 12px; color: #fff; background: linear-gradient(100deg, #23a5fa 0, #3275ff 240px, #3178ff 55%, #2d9aff 80%, #2b9dff 100%); }
.titlebar h1 { flex: 1; margin: 0 0 0 12px; font-size: 14px; font-weight: 400; }
.win { margin-left: 12px; }
.winsep { width: 1px; height: 20px; margin-left: 10px; background: #7fbfff; }
.winsep + .win { margin-left: 11px; }

.menubar { display: flex; gap: 16px; flex: none; height: 32px; padding: 0 18px; background: #efefef; border-bottom: 1px solid #d9d9d9; }
.body { display: flex; flex: 1; min-height: 0; }

.left { display: flex; flex-direction: column; width: 431px; flex: none; border-right: 1px solid #d9d9d9; }
.search { display: flex; align-items: center; flex: none; height: 40px; padding: 0 5px; border-bottom: 1px solid #d9d9d9; }
.shrink { width: 49px; height: 30px; border: 1px solid #dcdcdc; border-radius: 4px; }
.combo { display: flex; align-items: center; flex: 1; min-width: 0; height: 30px; margin: 0 10px; padding: 0 8px; border: 1px solid #d9dbe0; border-radius: 4px; font-size: 14px; }
.combo input { flex: 1; min-width: 0; outline: 0; }
.combo input::placeholder { color: #b9bdc4; opacity: 1; }
.go { display: flex; align-items: center; justify-content: center; width: 49px; height: 30px; border-radius: 3px; background: #4e94ff; }

.browse { display: flex; flex: 1; min-height: 0; }
.cats { width: 74px; flex: none; font-size: 14px; color: #6b7280; }
fieldset { display: block; min-width: 0; width: 56px; margin: 0 9px 26px; padding: 10px 0 9px; border: 2px dashed #6b7280; border-radius: 8px; }
fieldset.vip { border-color: #35a0f6; }
legend { margin: 0 auto; padding: 0; line-height: 20px; }
.vip legend, .cat.on { color: #35a0f6; }
.cat { display: flex; flex-direction: column; align-items: center; width: 100%; margin-bottom: 16px; line-height: 20px; }
.cat:last-child { margin-bottom: 0; }
.fav { margin-top: -6px; }

.treebox { display: flex; flex: 1; min-width: 0; overflow: hidden; background: linear-gradient(90deg, #d8e1f1 0, #eaeef5 12px, #f7f7f7 30px); }
.tree { flex: 1; min-width: 0; margin: -18px 0 0; padding: 0; list-style: none; overflow: hidden; }
.tree li { display: flex; align-items: center; height: 24px; padding-left: 60px; white-space: nowrap; }
.tree li.l1 { padding-left: 80px; }
.tree li.l2 { padding-left: 100px; }
.tree li.l3 { padding-left: 120px; }
.tree li.l4 { padding-left: 140px; }
.tree a { margin-left: 5px; color: inherit; text-decoration: none; }
.tree .file svg { margin-left: 2px; }
.tree .file a { margin-left: 3px; }
.tree .active { color: #5690ff; }
.innerbar { width: 11px; flex: none; }
.innerbar i { display: block; width: 10px; height: 411px; border-radius: 0 0 5px 5px; background: #666; }
.outerbar { display: flex; flex-direction: column; align-items: center; width: 12px; flex: none; padding-top: 5px; background: #efefef; }
.outerbar i { width: 10px; height: 49px; margin-top: 407px; border-radius: 5px; background: #666; }

.splitter { display: flex; align-items: center; flex: none; width: 10px; padding-top: 18px; background: #fcfffa; border-right: 1px solid #d5d5d5; }

.right { display: flex; flex-direction: column; flex: 1; min-width: 0; background: #fafafa; }
.memberrow { display: flex; align-items: center; flex: none; height: 34px; padding-left: 8px; border-bottom: 1px solid #d9d9d9; }
.member { display: flex; align-items: center; gap: 4px; height: 24px; padding: 0 5px 0 4px; border: 1px solid #666; border-radius: 3px; color: #777; font-size: 14px; }
.tabs { display: flex; align-items: center; justify-content: space-between; flex: none; height: 28px; padding-right: 10px; border-bottom: 1px solid #d9d9d9; }
.tab { height: 24px; padding: 0 16px 0 23px; border-right: 1px solid #555; font-weight: 700; }
.toolbar { display: flex; align-items: center; gap: 6px; flex: none; height: 27px; padding-left: 8px; }
.sep { width: 1px; height: 20px; margin: 0 -1px; background: #ccc; }
.toolbar label, .total, .near { margin-left: -3px; }
.toolbar input { height: 22px; border: 1px solid #ddd; border-radius: 2px; }
.page { width: 50px; padding: 0 5px; text-align: right; }
.lookup { width: 150px; }
.abi { width: 20px; height: 16px; border: solid #333; border-width: 1px 0; font: 700 12px/14px "Liberation Sans", Arial, sans-serif; color: #333; }

.viewer { display: flex; flex: 1; min-height: 0; }
.canvas { flex: 1; min-width: 0; overflow: hidden; background: #f1f1f1; }
.sheet { margin: 1px auto 0; overflow: visible; }
.viewbar { display: flex; flex-direction: column; align-items: center; width: 14px; flex: none; padding-top: 4px; background: #fafafa; }
.viewbar i { width: 10px; height: 72px; border-radius: 5px; background: #666; }
.down { margin-top: auto; }

.sheet text { font-family: "Liberation Mono", monospace; }
.sheet .heading { font-size: 42px; fill: #f33; }
.outline { fill: none; stroke: #ff8c8c; stroke-width: 3; }
.drill path { fill: none; stroke: #e0e0e0; stroke-width: 3; }
.drill text { font-size: 11px; fill: #d6d6d6; }
.note text { font-size: 31px; fill: #c8c8c8; }
.note.plated text { font-size: 11px; }
.major text, .minor text { font-family: "DejaVu Sans Mono", monospace; text-anchor: middle; }
.major text { font-weight: 700; fill: #000; }
.minor text { fill: #222; }
.sheet .stamp { font-family: "Liberation Sans", Arial, sans-serif; font-size: 81px; fill: #000; fill-opacity: 0.08; }

footer { flex: none; height: 20px; background: #0390dc; color: #fff; font: 700 15px/22px "Liberation Mono", monospace; text-align: center; }
</style>
